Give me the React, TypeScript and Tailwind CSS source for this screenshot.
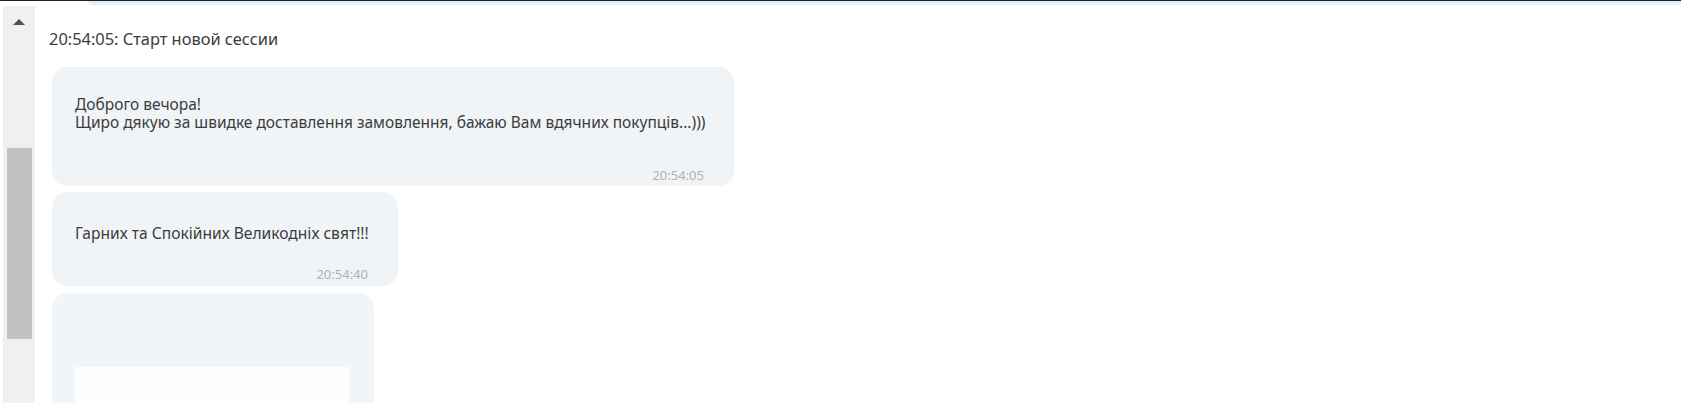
const firstMessage =
  "Доброго вечора!\nЩиро дякую за швидке доставлення замовлення, бажаю Вам вдячних покупців...)))";

export default function App() {
  return (
    <div className="w-[1681px] h-[403px] overflow-hidden bg-white flex flex-col font-['Noto_Sans',sans-serif] text-[#3c3c3c]">
      {/* top edge of the input above */}
      <div className="h-[6px] shrink-0 flex flex-col">
        <div className="h-px bg-[#1b252e]" />
        <div className="flex-1 flex">
          <div className="w-[88px]" />
          <div className="flex-1 rounded-bl-[6px] bg-gradient-to-b from-[#d9e8f3] to-[#f7fbfd]" />
        </div>
      </div>

      <div className="flex flex-1 min-h-0">
        {/* scrollbar */}
        <div className="w-[36px] shrink-0 pl-[3px] flex">
          <div className="w-[32px] bg-[#f0f0f0] flex flex-col items-center">
            <div className="mt-[13px] w-0 h-0 border-l-[6px] border-r-[6px] border-b-[6px] border-l-transparent border-r-transparent border-b-[#505050]" />
            <div className="mt-[123px] w-[25px] h-[191px] bg-[#c1c1c1]" />
          </div>
        </div>

        {/* messages */}
        <div className="flex-1 min-h-0 pl-[13px] pt-[23px] flex flex-col items-start">
          <div className="shrink-0 text-[16.4px] leading-[20px]">20:54:05: Старт новой сессии</div>

          <div className="shrink-0 ml-[3px] mt-[18px] w-[682px] h-[119px] rounded-[15px] bg-[#f1f4f7] pl-[23px] pr-[16px] pt-[28px] pb-[4px] flex flex-col">
            <div className="text-[15.5px] leading-[18px] whitespace-pre">{firstMessage}</div>
            <div className="mt-auto mr-[14px] self-end text-[13px] leading-[14px] text-[#b0b0b0]">20:54:05</div>
          </div>

          <div className="shrink-0 ml-[3px] mt-[6px] w-[346px] h-[94px] rounded-[15px] bg-[#f1f4f7] pl-[23px] pr-[30px] pt-[32px] pb-[5px] flex flex-col">
            <div className="text-[15.6px] leading-[18px] whitespace-nowrap">Гарних та Спокійних Великодніх свят!!!</div>
            <div className="mt-auto self-end text-[13px] leading-[14px] text-[#b0b0b0]">20:54:40</div>
          </div>

          <div className="shrink-0 ml-[3px] mt-[7px] w-[322px] h-[140px] rounded-t-[15px] bg-[#f2f5f8] pl-[23px] pr-[24px] pt-[74px]">
            <div className="h-[60px] bg-[#fdfdfd]" />
          </div>
        </div>
      </div>
    </div>
  );
}
